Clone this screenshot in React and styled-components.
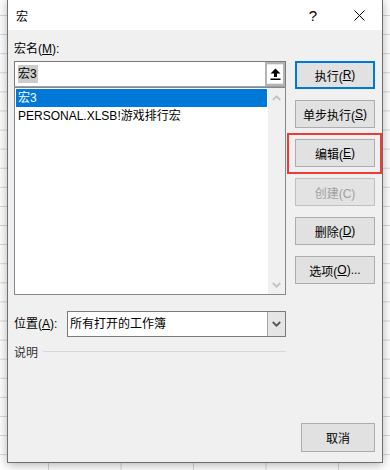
import React from 'react'
import styled, { createGlobalStyle, css } from 'styled-components'

const GlobalStyle = createGlobalStyle`
	body {
		margin: 0;
		font-family: 'Liberation Sans', 'Noto Sans CJK SC', sans-serif;
		font-size: 12px;
		color: #000;
	}
`

const Sheet = styled.div`
	width: 390px;
	height: 470px;
	overflow: hidden;
	padding-left: 7px;
	box-sizing: border-box;
	background-color: #fff;
	background-image: linear-gradient(to bottom, #d6d6d6 1px, transparent 1px),
		linear-gradient(to right, #d6d6d6 1px, transparent 1px);
	background-size: 100% 19.1px, 72.5px 100%;
	background-position: 0 15px, 48px 0;
`

const Dialog = styled.div`
	width: 376px;
	height: 464px;
	margin-top: -1px;
	box-sizing: border-box;
	border: 1px solid #6f6f6f;
	background: #f0f0f0;
	box-shadow: 0 2px 10px rgba(0, 0, 0, 0.3);
	display: flex;
	flex-direction: column;
`

const TitleBar = styled.div`
	height: 30px;
	background: #fff;
	display: flex;
	align-items: center;
	padding-left: 8px;
`

const Title = styled.span`
	font-size: 12px;
	flex: 1;
`

const CaptionButton = styled.div`
	width: 46px;
	height: 30px;
	display: flex;
	align-items: center;
	justify-content: center;
	font-size: 15px;
`

const Body = styled.div`
	flex: 1;
	display: flex;
	gap: 9px;
	padding: 0 6px;
`

const LeftColumn = styled.div`
	width: 272px;
	padding-top: 10px;
	display: flex;
	flex-direction: column;
`

const Label = styled.div`
	height: 18px;
	line-height: 18px;
	white-space: nowrap;
`

const Key = styled.span`
	text-decoration: underline;
	text-underline-offset: 1px;
`

const MacroInput = styled.div`
	height: 26px;
	margin-top: 3px;
	box-sizing: border-box;
	border: 1px solid #7a7a7a;
	border-bottom-color: #a0a0a0;
	background: #fff;
	display: flex;
	align-items: center;
	padding-left: 3px;
`

const Selected = styled.span`
	background: #cccccc;
	line-height: 18px;
	padding-right: 1px;
	flex: 1;
	max-width: fit-content;
`

const Spacer = styled.div`
	flex: 1;
`

const CollapseButton = styled.div`
	width: 20px;
	align-self: stretch;
	box-sizing: border-box;
	border: 2px solid #b4b4b4;
	background: #e6e6e6;
	display: flex;
	justify-content: center;
	padding-top: 1px;
`

const CollapseFace = styled.div`
	width: 16px;
	height: 18px;
	background: #fff;
	display: flex;
	align-items: center;
	justify-content: center;
`

const MacroList = styled.div`
	height: 208px;
	box-sizing: border-box;
	border: 1px solid #828790;
	background: #fff;
	display: flex;
`

const Items = styled.div`
	flex: 1;
	padding: 1px;
`

const Item = styled.div`
	height: 18px;
	line-height: 18px;
	padding-left: 2px;
	white-space: nowrap;
	${(p) =>
		p.$active &&
		css`
			background: #0078d7;
			color: #fff;
		`}
`

const ScrollBar = styled.div`
	width: 17px;
	background: #f0f0f0;
	display: flex;
	flex-direction: column;
	justify-content: space-between;
	align-items: center;
	padding: 7px 0 6px;
`

const LocationRow = styled.div`
	margin-top: 16px;
	display: flex;
	align-items: center;
`

const LocationLabel = styled(Label)`
	width: 53px;
`

const Combo = styled.div`
	flex: 1;
	height: 26px;
	box-sizing: border-box;
	border: 1px solid #7a7a7a;
	background: #fff;
	display: flex;
	align-items: center;
	padding-left: 2px;
`

const ComboText = styled.span`
	flex: 1;
	line-height: 18px;
`

const DropButton = styled.div`
	width: 18px;
	align-self: stretch;
	box-sizing: border-box;
	border-left: 1px solid #a6a6a6;
	background: #e5e5e5;
	display: flex;
	align-items: center;
	justify-content: center;
`

const DescriptionRow = styled.div`
	margin-top: 5px;
	height: 18px;
	display: flex;
	align-items: center;
	gap: 5px;
	color: #333;
`

const Rule = styled.div`
	flex: 1;
	height: 1px;
	background: #d7d7d7;
`

const RightColumn = styled.div`
	width: 80px;
	padding-top: 31px;
	display: flex;
	flex-direction: column;
	gap: 11px;
`

const Button = styled.div`
	width: ${(p) => p.$width || 80}px;
	height: ${(p) => p.$height || 28}px;
	box-sizing: border-box;
	border: 1px solid #adadad;
	background: #e1e1e1;
	display: flex;
	align-items: center;
	justify-content: center;
	white-space: nowrap;
	position: relative;
	${(p) =>
		p.$default &&
		css`
			border: 2px solid #0078d7;
		`}
	${(p) =>
		p.$disabled &&
		css`
			border-color: #bfbfbf;
			background: #e3e3e3;
			color: #a0a0a0;
		`}
	${(p) =>
		p.$marked &&
		css`
			&::after {
				content: '';
				position: absolute;
				top: -7px;
				left: -9px;
				right: -8px;
				bottom: -8px;
				border: 2px solid #ef3a3a;
			}
		`}
`

const Footer = styled.div`
	display: flex;
	justify-content: flex-end;
	padding: 0 7px 10px 0;
`

const Chevron = ({ up, color = '#c2c2c2' }) => (
	<svg width='9' height='6' viewBox='0 0 9 6'>
		<polyline
			points={up ? '0.8,5 4.5,1.3 8.2,5' : '0.8,1 4.5,4.7 8.2,1'}
			fill='none'
			stroke={color}
			strokeWidth='1.8'
		/>
	</svg>
)

export default function App() {
	return (
		<Sheet>
			<GlobalStyle />
			<Dialog>
				<TitleBar>
					<Title>宏</Title>
					<CaptionButton>?</CaptionButton>
					<CaptionButton>
						<svg width='11' height='11' viewBox='0 0 11 11'>
							<path d='M0.5 0.5 L10.5 10.5 M10.5 0.5 L0.5 10.5' stroke='#000' strokeWidth='1' />
						</svg>
					</CaptionButton>
				</TitleBar>

				<Body>
					<LeftColumn>
						<Label>
							宏名(<Key>M</Key>):
						</Label>
						<MacroInput>
							<Selected>宏3</Selected>
							<Spacer />
							<CollapseButton>
								<CollapseFace>
									<svg width='11' height='12' viewBox='0 0 11 12'>
										<path d='M5.5 0.5 L10.5 5.5 L7 5.5 L7 9 L4 9 L4 5.5 L0.5 5.5 Z' fill='#000' />
										<rect x='0.5' y='10.5' width='10' height='1.5' fill='#000' />
									</svg>
								</CollapseFace>
							</CollapseButton>
						</MacroInput>

						<MacroList>
							<Items>
								<Item $active>宏3</Item>
								<Item>PERSONAL.XLSB!游戏排行宏</Item>
							</Items>
							<ScrollBar>
								<Chevron up />
								<Chevron />
							</ScrollBar>
						</MacroList>

						<LocationRow>
							<LocationLabel>
								位置(<Key>A</Key>):
							</LocationLabel>
							<Combo>
								<ComboText>所有打开的工作簿</ComboText>
								<DropButton>
									<Chevron color='#555' />
								</DropButton>
							</Combo>
						</LocationRow>

						<DescriptionRow>
							说明
							<Rule />
						</DescriptionRow>
					</LeftColumn>

					<RightColumn>
						<Button $default>
							执行(<Key>R</Key>)
						</Button>
						<Button>
							单步执行(<Key>S</Key>)
						</Button>
						<Button $marked>
							编辑(<Key>E</Key>)
						</Button>
						<Button $disabled>创建(C)</Button>
						<Button>
							删除(<Key>D</Key>)
						</Button>
						<Button>
							选项(<Key>O</Key>)...
						</Button>
					</RightColumn>
				</Body>

				<Footer>
					<Button $width={74} $height={29}>
						取消
					</Button>
				</Footer>
			</Dialog>
		</Sheet>
	)
}
